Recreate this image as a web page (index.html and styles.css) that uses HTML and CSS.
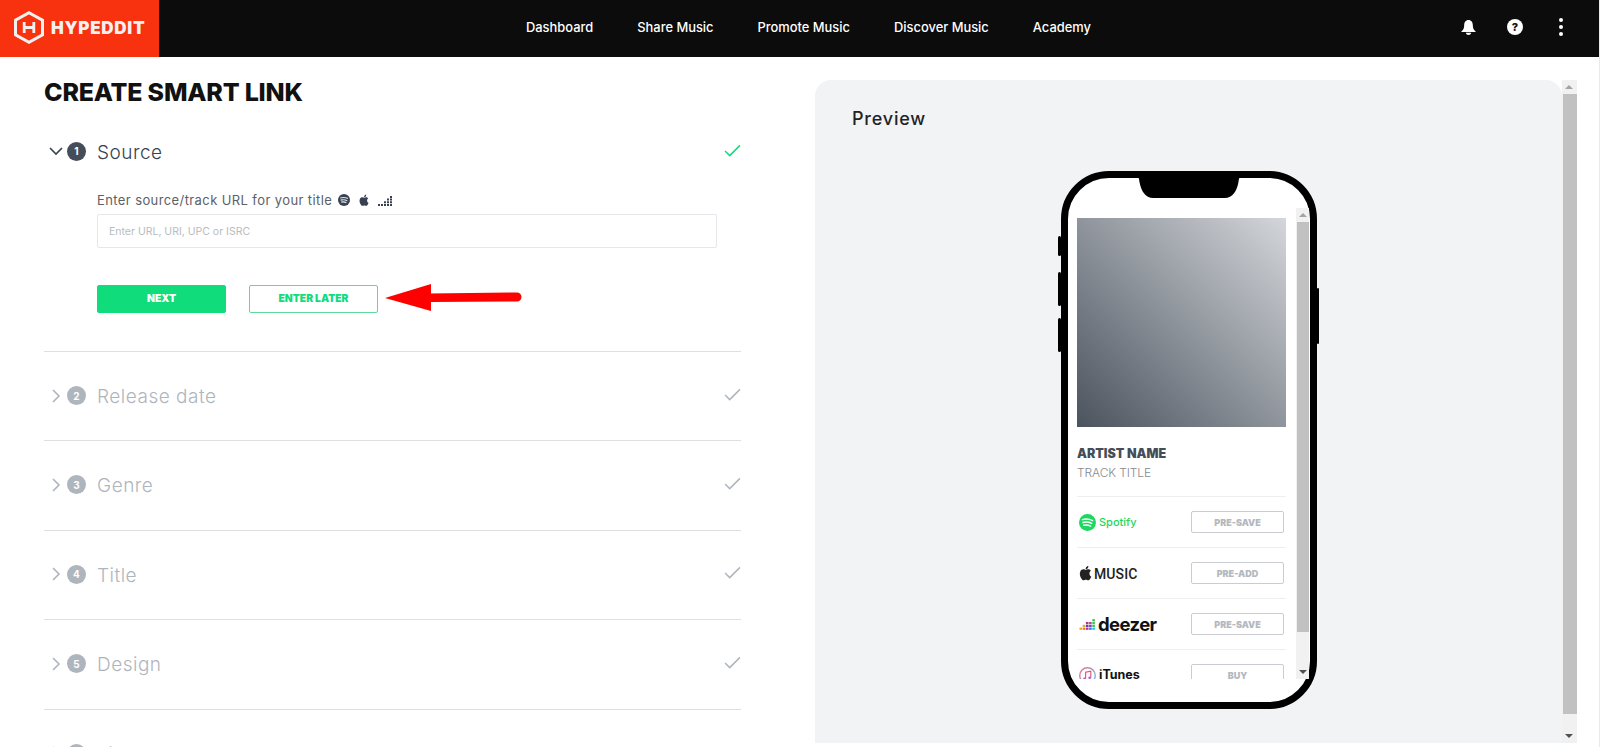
FILE: index.html
```html
<!DOCTYPE html>
<html lang="en">

<head>
    <meta charset="UTF-8">
    <meta name="viewport" content="width=device-width, initial-scale=1.0">
    <title>Create Smart Link</title>
    <link rel="stylesheet" href="styles.css">
</head>

<body>
    <header class="topbar">
        <a class="brand">
            <svg class="brand-mark" viewBox="0 0 30 33" fill="none" stroke="#f3f0f0">
                <path d="M15 1.7 L28.5 9.2 V23.8 L15 31.3 L1.5 23.8 V9.2 Z" stroke-width="3" />
                <path d="M10.2 11 V22 M19.8 11 V22 M10.2 16.5 H19.8" stroke-width="2.8" />
            </svg>
            <span class="brand-name">HYPEDDIT</span>
        </a>
        <nav class="nav">
            <a>Dashboard</a>
            <a>Share Music</a>
            <a>Promote Music</a>
            <a>Discover Music</a>
            <a>Academy</a>
        </nav>
        <div class="top-icons">
            <svg class="icon-bell" viewBox="0 0 16 17" fill="#fff">
                <path d="M8 0.5 C11 0.5 12.6 3 12.6 6 C12.6 9.5 13.6 10.8 15.5 12.5 V13.4 H0.5 V12.5 C2.4 10.8 3.4 9.5 3.4 6 C3.4 3 5 0.5 8 0.5 Z" />
                <path d="M5.2 14.2 H10.8 C10.6 15.7 9.4 16.6 8 16.6 C6.6 16.6 5.4 15.7 5.2 14.2 Z" />
            </svg>
            <span class="icon-help">?</span>
            <span class="icon-more"><i></i><i></i><i></i></span>
        </div>
    </header>

    <main class="page">
        <section class="wizard">
            <h1>CREATE SMART LINK</h1>

            <div class="step step-open">
                <div class="step-head">
                    <svg class="chevron" viewBox="0 0 14 14"><path d="M1 4 L7 10 L13 4" /></svg>
                    <span class="step-num">1</span>
                    <span class="step-title">Source</span>
                    <svg class="check" viewBox="0 0 18 14"><path d="M1 7.5 L6 12.5 L17 1.5" /></svg>
                </div>
                <div class="step-body">
                    <label class="field-label" for="source">Enter source/track URL for your title
                        <svg class="mini" viewBox="0 0 12 12"><circle cx="6" cy="6" r="6" fill="#374151" /><path d="M2.2 4 C5 3.2 7.6 3.4 9.9 4.5 M2.6 6.1 C5 5.5 7.2 5.7 9.3 6.7 M3.2 8.2 C5 7.8 6.8 7.9 8.4 8.7" stroke="#e5e7eb" stroke-width="1.2" fill="none" /></svg>
                        <svg class="mini mini-apple" viewBox="1 1 11 13"><path d="M9.9 7.4 C9.9 5.9 11.1 5.2 11.2 5.1 C10.5 4.1 9.4 4 9 3.9 C8.1 3.8 7.2 4.5 6.7 4.5 C6.2 4.5 5.5 3.9 4.7 3.9 C3.6 3.9 2.6 4.5 2.1 5.5 C1 7.4 1.8 10.2 2.9 11.8 C3.4 12.6 4 13.4 4.8 13.4 C5.6 13.4 5.9 12.9 6.8 12.9 C7.7 12.9 8 13.4 8.8 13.4 C9.6 13.4 10.2 12.6 10.7 11.8 C11.3 11 11.5 10.2 11.5 10.1 C11.5 10.1 9.9 9.5 9.9 7.4 Z M8.4 3 C8.8 2.5 9.1 1.8 9 1 C8.4 1 7.6 1.4 7.2 1.9 C6.8 2.4 6.5 3.1 6.6 3.8 C7.3 3.9 8 3.5 8.4 3 Z" fill="#374151" /></svg>
                        <svg class="mini mini-bars" viewBox="0 0 14 12" fill="#374151"><path d="M0 10h2v2H0z M3 10h2v2H3z M6 10h2v2H6z M9 10h2v2H9z M12 10h2v2h-2z M6 7.3h2v2H6z M9 7.3h2v2H9z M12 7.3h2v2h-2z M9 4.6h2v2H9z M12 4.6h2v2h-2z M12 1.9h2v2h-2z" /></svg>
                    </label>
                    <input id="source" class="text-input" type="text" placeholder="Enter URL, URI, UPC or ISRC">
                    <div class="actions">
                        <button class="btn btn-solid">NEXT</button>
                        <button class="btn btn-line">ENTER LATER</button>
                    </div>
                </div>
            </div>

            <div class="step">
                <div class="step-head">
                    <svg class="chevron" viewBox="0 0 14 14"><path d="M4 1 L10 7 L4 13" /></svg>
                    <span class="step-num">2</span>
                    <span class="step-title">Release date</span>
                    <svg class="check" viewBox="0 0 18 14"><path d="M1 7.5 L6 12.5 L17 1.5" /></svg>
                </div>
            </div>
            <div class="step">
                <div class="step-head">
                    <svg class="chevron" viewBox="0 0 14 14"><path d="M4 1 L10 7 L4 13" /></svg>
                    <span class="step-num">3</span>
                    <span class="step-title">Genre</span>
                    <svg class="check" viewBox="0 0 18 14"><path d="M1 7.5 L6 12.5 L17 1.5" /></svg>
                </div>
            </div>
            <div class="step">
                <div class="step-head">
                    <svg class="chevron" viewBox="0 0 14 14"><path d="M4 1 L10 7 L4 13" /></svg>
                    <span class="step-num">4</span>
                    <span class="step-title">Title</span>
                    <svg class="check" viewBox="0 0 18 14"><path d="M1 7.5 L6 12.5 L17 1.5" /></svg>
                </div>
            </div>
            <div class="step">
                <div class="step-head">
                    <svg class="chevron" viewBox="0 0 14 14"><path d="M4 1 L10 7 L4 13" /></svg>
                    <span class="step-num">5</span>
                    <span class="step-title">Design</span>
                    <svg class="check" viewBox="0 0 18 14"><path d="M1 7.5 L6 12.5 L17 1.5" /></svg>
                </div>
            </div>
            <div class="step">
                <div class="step-head">
                    <svg class="chevron" viewBox="0 0 14 14"><path d="M4 1 L10 7 L4 13" /></svg>
                    <span class="step-num">6</span>
                    <span class="step-title">Links</span>
                </div>
            </div>

            <!-- red annotation arrow on top of the form -->
            <svg class="annotation" viewBox="0 0 140 30">
                <path d="M44 9.5 L132 8.5 A4.5 4.5 0 0 1 132 17.5 L44 18 Z" fill="#fe0000" />
                <path d="M0 14 L46 0 V27 Z" fill="#fe0000" />
            </svg>
        </section>

        <section class="preview">
            <div class="preview-card">
                <h2>Preview</h2>
                <div class="phone">
                    <svg class="notch" viewBox="0 0 102 20" preserveAspectRatio="none"><path d="M0 0 H102 C100 0 100 2 99.5 5 C98 13 94 20 86 20 H16 C8 20 4 13 2.5 5 C2 2 2 0 0 0 Z" /></svg>
                    <span class="side side-a"></span>
                    <span class="side side-b"></span>
                    <span class="side side-c"></span>
                    <span class="side side-d"></span>
                    <div class="screen">
                        <div class="screen-scroll">
                            <div class="cover"></div>
                            <div class="artist">ARTIST NAME</div>
                            <div class="track">TRACK TITLE</div>
                            <div class="store">
                                <span class="store-logo spotify">
                                    <svg class="logo-icon" viewBox="0 0 18 18"><circle cx="9" cy="9" r="9" fill="#1ed760" /><path d="M3.6 6 C7 5 11 5.3 14.4 7 M4.3 9 C7.2 8.2 10.5 8.5 13.4 10 M5 11.9 C7.4 11.3 9.8 11.5 12.3 12.8" stroke="#fff" stroke-width="1.5" stroke-linecap="round" fill="none" /></svg>
                                    Spotify
                                </span>
                                <button class="store-btn">PRE-SAVE</button>
                            </div>
                            <div class="store">
                                <span class="store-logo apple">
                                    <svg class="apple-icon" viewBox="1 1 11 13"><path d="M9.9 7.4 C9.9 5.9 11.1 5.2 11.2 5.1 C10.5 4.1 9.4 4 9 3.9 C8.1 3.8 7.2 4.5 6.7 4.5 C6.2 4.5 5.5 3.9 4.7 3.9 C3.6 3.9 2.6 4.5 2.1 5.5 C1 7.4 1.8 10.2 2.9 11.8 C3.4 12.6 4 13.4 4.8 13.4 C5.6 13.4 5.9 12.9 6.8 12.9 C7.7 12.9 8 13.4 8.8 13.4 C9.6 13.4 10.2 12.6 10.7 11.8 C11.3 11 11.5 10.2 11.5 10.1 C11.5 10.1 9.9 9.5 9.9 7.4 Z M8.4 3 C8.8 2.5 9.1 1.8 9 1 C8.4 1 7.6 1.4 7.2 1.9 C6.8 2.4 6.5 3.1 6.6 3.8 C7.3 3.9 8 3.5 8.4 3 Z" fill="#222" /></svg>
                                    <span class="apple-word">MUSIC</span>
                                </span>
                                <button class="store-btn">PRE-ADD</button>
                            </div>
                            <div class="store">
                                <span class="store-logo deezer">
                                    <svg class="deezer-icon" viewBox="0 0 16 12">
                                        <rect x="0" y="9.6" width="2.6" height="2.2" fill="#f6a21b" />
                                        <rect x="3.2" y="9.6" width="2.6" height="2.2" fill="#e8762e" />
                                        <rect x="3.2" y="6.8" width="2.6" height="2.2" fill="#f0a030" />
                                        <rect x="6.4" y="9.6" width="2.6" height="2.2" fill="#b4308c" />
                                        <rect x="6.4" y="6.8" width="2.6" height="2.2" fill="#5b3fb0" />
                                        <rect x="6.4" y="4" width="2.6" height="2.2" fill="#b4308c" />
                                        <rect x="9.6" y="9.6" width="2.6" height="2.2" fill="#2e7bd6" />
                                        <rect x="9.6" y="6.8" width="2.6" height="2.2" fill="#7a3fc0" />
                                        <rect x="9.6" y="4" width="2.6" height="2.2" fill="#c03f9a" />
                                        <rect x="12.8" y="9.6" width="2.6" height="2.2" fill="#2fb8d8" />
                                        <rect x="12.8" y="6.8" width="2.6" height="2.2" fill="#36c46e" />
                                        <rect x="12.8" y="4" width="2.6" height="2.2" fill="#48c34f" />
                                        <rect x="12.8" y="1.2" width="2.6" height="2.2" fill="#3fb65b" />
                                    </svg>
                                    deezer
                                </span>
                                <button class="store-btn">PRE-SAVE</button>
                            </div>
                            <div class="store">
                                <span class="store-logo itunes">
                                    <svg class="logo-icon" viewBox="0 0 18 18" fill="none">
                                        <defs>
                                            <linearGradient id="itunesRing" x1="0" y1="0" x2="1" y2="1">
                                                <stop offset="0" stop-color="#f76c8c" />
                                                <stop offset="1" stop-color="#5ac8f0" />
                                            </linearGradient>
                                        </defs>
                                        <circle cx="9" cy="9" r="8.2" stroke="url(#itunesRing)" stroke-width="1.5" />
                                        <path d="M7 12.5 V5.6 L12.5 4.4 V11.3" stroke="#e8506e" stroke-width="1.2" />
                                        <circle cx="5.8" cy="12.6" r="1.4" fill="#c850b0" />
                                        <circle cx="11.3" cy="11.4" r="1.4" fill="#b45ed0" />
                                    </svg>
                                    iTunes
                                </span>
                                <button class="store-btn">BUY</button>
                            </div>
                        </div>
                        <div class="mini-scrollbar">
                            <span class="arrow-up"></span>
                            <span class="thumb"></span>
                            <span class="arrow-down"></span>
                        </div>
                    </div>
                </div>
            </div>
            <div class="page-scrollbar">
                <span class="arrow-up"></span>
                <span class="thumb"></span>
                <span class="arrow-down"></span>
            </div>
        </section>
    </main>
</body>

</html>
```

FILE: styles.css
```css
* {
    box-sizing: border-box;
}

html,
body {
    margin: 0;
    height: 100%;
    overflow: hidden;
}

body {
    border-right: 1px solid #e9e9e9;
    background-color: #fff;
    color: #111827;
    font-family: Inter, "Liberation Sans", sans-serif;
}

/* top bar */
.topbar {
    display: flex;
    align-items: center;
    height: 57px;
    background-color: #0c0c0c;
}

.brand {
    display: flex;
    align-items: center;
    gap: 7px;
    width: 159px;
    height: 100%;
    padding: 0 0 2px 14px;
    background-color: #f8310e;
}

.brand-mark {
    width: 30px;
    height: 33px;
}

.brand-name {
    color: #f3f0f0;
    font-size: 17px;
    font-weight: 900;
    letter-spacing: 0.7px;
}

.nav {
    display: flex;
    gap: 44px;
    margin: 0 0 3px 367px;
}

.nav a {
    color: #fff;
    font-size: 12.9px;
    font-weight: 500;
}

.top-icons {
    display: flex;
    align-items: center;
    margin: 0 0 3px auto;
    padding-right: 36px;
}

.icon-bell {
    width: 15px;
    height: 17px;
}

.icon-help {
    display: flex;
    align-items: center;
    justify-content: center;
    width: 16px;
    height: 16px;
    margin-left: 31px;
    border-radius: 50%;
    background-color: #fff;
    color: #111;
    font-size: 11px;
    font-weight: 800;
}

.icon-more {
    display: flex;
    flex-direction: column;
    gap: 3px;
    margin-left: 36px;
}

.icon-more i {
    width: 4px;
    height: 4px;
    border-radius: 50%;
    background-color: #fff;
}

/* page */
.page {
    display: flex;
    height: 690px;
}

.wizard {
    position: relative;
    width: 697px;
    margin-left: 44px;
}

.wizard h1 {
    margin: 20px 0 0;
    color: #111;
    font-size: 25px;
    line-height: 30px;
    font-weight: 800;
    letter-spacing: -0.2px;
}

.step {
    height: 89.4px;
    border-bottom: 1px solid #dedfe1;
}

.step-open {
    height: 245px;
    padding-top: 31px;
}

.step-head {
    display: flex;
    align-items: center;
    height: 87px;
    color: #afb5bd;
}

.step-open .step-head {
    height: 26px;
    color: #374151;
}

.chevron {
    width: 14px;
    height: 14px;
    margin-left: 5px;
    fill: none;
    stroke: currentColor;
    stroke-width: 1.6;
}

.step-num {
    display: flex;
    align-items: center;
    justify-content: center;
    width: 19px;
    height: 19px;
    margin-left: 4px;
    border-radius: 50%;
    background-color: #afb5bd;
    color: #fff;
    font-size: 10px;
    font-weight: 700;
}

.step-open .step-num {
    background-color: #454d59;
}

.step-title {
    margin: 2px 0 0 11px;
    font-size: 19px;
    font-weight: 300;
    letter-spacing: 0.5px;
}

.check {
    width: 17px;
    height: 13px;
    margin: 0 0 3px auto;
    fill: none;
    stroke: #afb5bd;
    stroke-width: 1.6;
}

.step-open .check {
    margin-bottom: 1px;
    stroke: #10dc7c;
}

.step-body {
    padding: 28px 0 0 53px;
}

.field-label {
    display: flex;
    align-items: center;
    height: 16px;
    color: #5c5f66;
    font-size: 13px;
    letter-spacing: 0.4px;
}

.mini {
    width: 12px;
    height: 12px;
    margin-left: 6px;
}

.mini-apple {
    width: 10px;
    height: 13px;
    margin-left: 9px;
}

.mini-bars {
    width: 14px;
    height: 12px;
    margin-left: 9px;
}

.text-input {
    display: block;
    width: 620px;
    height: 34px;
    margin-top: 6px;
    padding: 0 11px;
    border: 1px solid #e5e7eb;
    border-radius: 2px;
    font-family: inherit;
    font-size: 10.5px;
}

.text-input::placeholder {
    color: #b9bcc2;
}

.actions {
    display: flex;
    gap: 23px;
    margin-top: 37px;
}

.btn {
    width: 129px;
    height: 28px;
    padding: 0 0 2px;
    border-radius: 2px;
    font-family: inherit;
    font-size: 10.3px;
    font-weight: 900;
}

.btn-solid {
    border: 1px solid #10dc7c;
    background-color: #10dc7c;
    color: #fff;
}

.btn-line {
    border: 1px solid #5fd79d;
    background-color: #fff;
    color: #10dc7c;
}

.annotation {
    position: absolute;
    left: 341px;
    top: 227px;
    width: 140px;
    height: 30px;
}

/* preview */
.preview {
    display: flex;
    flex: 1;
    height: 663px;
    margin: 23px 22px 0 74px;
}

.preview-card {
    position: relative;
    flex: 1;
    padding: 27px 37px;
    border-radius: 16px 16px 0 0;
    background-color: #f2f3f5;
}

.preview-card h2 {
    margin: 0;
    color: #1f2328;
    font-size: 18px;
    line-height: 24px;
    font-weight: 500;
    letter-spacing: 0.8px;
}

.phone {
    position: relative;
    width: 256px;
    height: 538px;
    margin: 40px 0 0 209px;
    padding-top: 30px;
    border: 7px solid #000;
    border-radius: 48px;
    background-color: #fff;
}

.notch {
    position: absolute;
    left: 69px;
    top: -1px;
    width: 104px;
    height: 21px;
    fill: #000;
}

.side {
    position: absolute;
    width: 3px;
    background-color: #000;
    border-radius: 2px;
}

.side-a {
    left: -10px;
    top: 58px;
    height: 20px;
}

.side-b {
    left: -10px;
    top: 94px;
    height: 34px;
}

.side-c {
    left: -10px;
    top: 140px;
    height: 34px;
}

.side-d {
    right: -9px;
    top: 110px;
    width: 2px;
    height: 56px;
}

.screen {
    display: flex;
    height: 471px;
    padding-left: 9px;
    overflow: hidden;
}

.screen-scroll {
    width: 209px;
    overflow: hidden;
}

.cover {
    width: 209px;
    height: 209px;
    margin-top: 10px;
    background: linear-gradient(45deg, #4b535e, #d3d6da);
}

.artist {
    margin-top: 18px;
    color: #454d59;
    font-size: 12.5px;
    line-height: 17px;
    font-weight: 900;
}

.track {
    margin-top: 2px;
    color: #868a90;
    font-size: 12px;
    line-height: 17px;
    font-weight: 300;
    letter-spacing: -0.1px;
}

.store {
    display: flex;
    align-items: center;
    justify-content: space-between;
    height: 51px;
    padding: 0 2px 0 2px;
    border-top: 1px solid #eceef0;
}

.track + .store {
    margin-top: 15px;
}

.store-logo {
    display: flex;
    align-items: center;
    gap: 3px;
    line-height: 1;
}

.logo-icon {
    width: 17px;
    height: 17px;
}

.spotify {
    color: #1ed760;
    font-size: 11px;
    font-weight: 500;
}

.apple {
    gap: 2px;
    color: #222;
    font-family: Roboto, sans-serif;
    font-size: 14px;
    font-weight: 500;
    letter-spacing: 0.1px;
}

.apple-icon {
    width: 13px;
    height: 15px;
}

.apple-word {
    margin-top: 2px;
}

.deezer {
    gap: 2px;
    color: #111;
    font-size: 18.5px;
    font-weight: 700;
    letter-spacing: -0.6px;
}

.deezer-icon {
    width: 17px;
    height: 12px;
}

.itunes {
    color: #111;
    font-size: 12.5px;
    font-weight: 700;
}

.store-btn {
    width: 93px;
    height: 22px;
    border: 1px solid #c9cdd3;
    border-radius: 2px;
    background-color: #fff;
    color: #b4b9c0;
    font-family: inherit;
    font-size: 9px;
    font-weight: 900;
}

/* fake scrollbars */
.mini-scrollbar,
.page-scrollbar {
    position: relative;
    display: flex;
    flex-direction: column;
    width: 13px;
    background-color: #f1f1f1;
}

.mini-scrollbar {
    margin-left: 10px;
}

.page-scrollbar {
    width: 15px;
}

.thumb {
    height: 410px;
    margin: 14px 0 0 1px;
    background-color: #c1c1c1;
}

.page-scrollbar .thumb {
    height: 620px;
}

.arrow-up,
.arrow-down {
    position: absolute;
    left: 3px;
    width: 0;
    height: 0;
    border-left: 4px solid transparent;
    border-right: 4px solid transparent;
}

.arrow-up {
    top: 5px;
    border-bottom: 4px solid #a3a3a3;
}

.arrow-down {
    bottom: 5px;
    border-top: 4px solid #505050;
}
```
